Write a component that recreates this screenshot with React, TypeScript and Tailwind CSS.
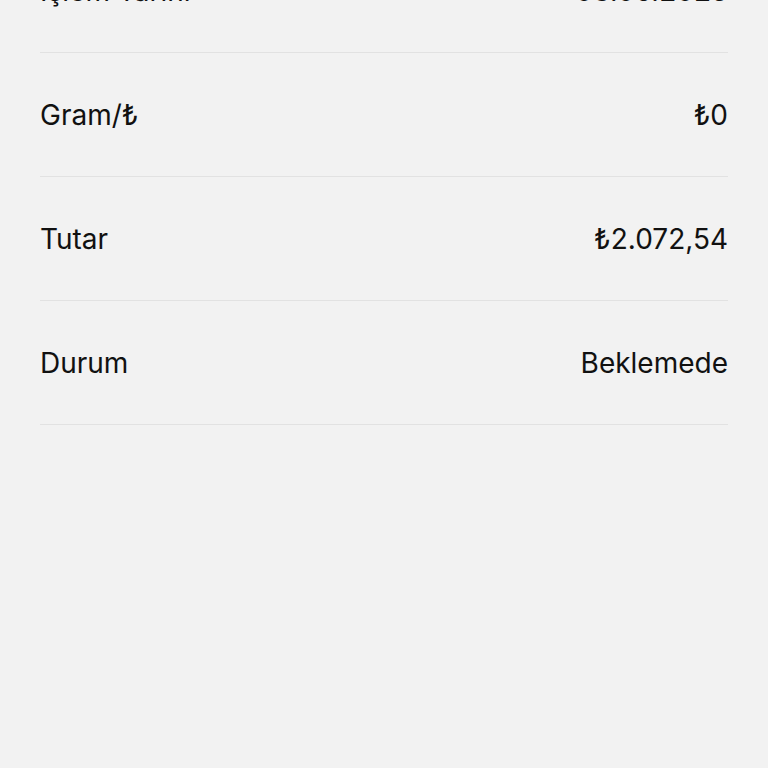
const ROWS = [
  { label: 'İşlem Tarihi', value: '03.06.2025' },
  { label: 'Gram/₺', value: '₺0' },
  { label: 'Tutar', value: '₺2.072,54' },
  { label: 'Durum', value: 'Beklemede' },
];

export default function App() {
  return (
    <div
      className="h-[768px] w-[768px] overflow-hidden bg-[#f2f2f2] text-[#111111]"
      style={{ fontFamily: 'Inter, "Noto Sans", sans-serif' }}
    >
      {/* liste yukarı kaydırılmış durumda */}
      <div className="-mt-[71px] px-[40px]">
        {ROWS.map((row) => (
          <div
            key={row.label}
            className="flex h-[124px] items-center justify-between border-b border-[#e2e2e2] text-[28px] leading-none"
          >
            <span>{row.label}</span>
            <span>{row.value}</span>
          </div>
        ))}
      </div>
    </div>
  );
}
